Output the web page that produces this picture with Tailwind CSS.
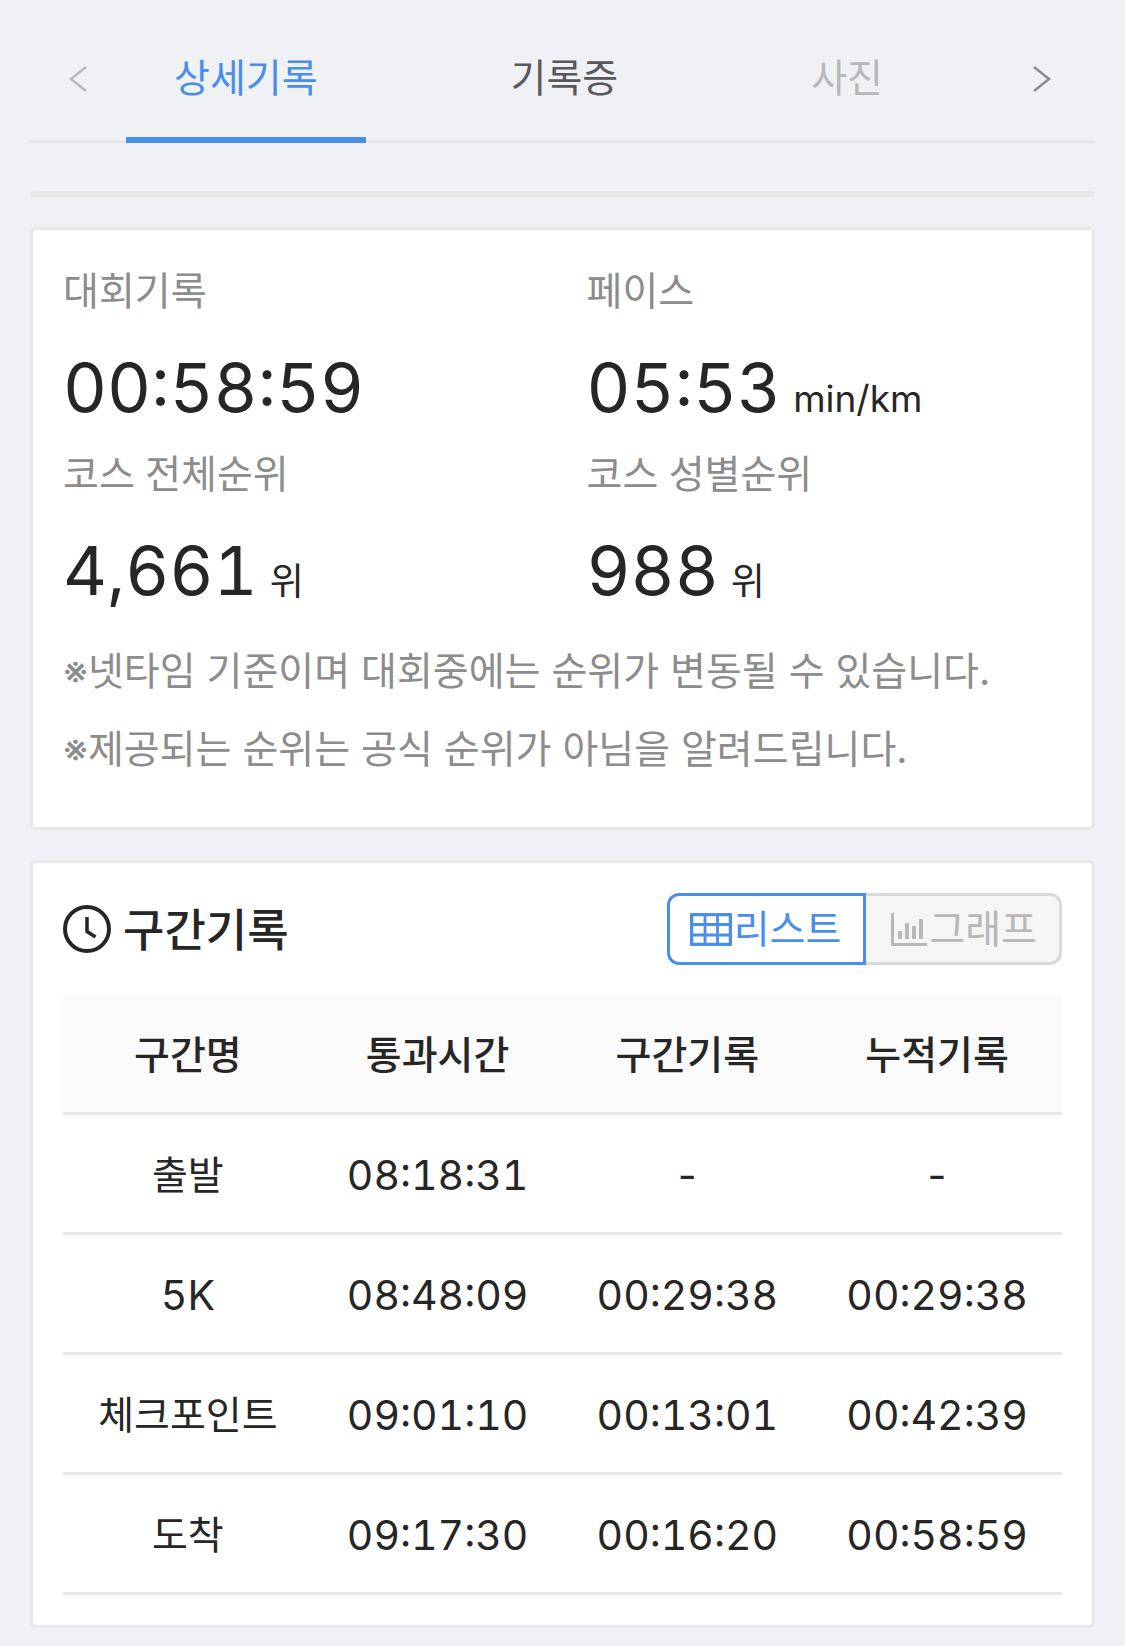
<!DOCTYPE html>
<html lang="ko">
<head>
    <meta charset="UTF-8">
    <meta name="viewport" content="width=device-width, initial-scale=1.0">
    <title>상세기록</title>
    <script src="https://cdn.jsdelivr.net/npm/@tailwindcss/browser@4"></script>
</head>
<body class="bg-[#eff1f5] text-[#262626] font-['Inter','Noto_Sans_CJK_KR',sans-serif] text-[39px] leading-[66px] px-[30px] pb-[18px]">
    <!-- 탭 메뉴 -->
    <nav class="flex h-[143px] border-b-[3px] border-[#e8e8e8]">
        <button type="button" aria-label="이전" class="w-24 shrink-0 flex items-center justify-center pt-[17px] text-[#b8b8b8]">
            <svg class="w-[18px] h-[28px]" viewBox="0 0 18 28" fill="none" stroke="currentColor" stroke-width="2.5"><path d="M17 2 2 14 17 26"/></svg>
        </button>
        <div class="flex flex-1 gap-[97px] whitespace-nowrap">
            <a href="#detail" class="h-[143px] px-12 pt-[45px] text-[#4a8eed] border-b-[6px] border-[#4a8eed]">상세기록</a>
            <a href="#certificate" class="h-[143px] px-12 pt-[45px] text-[#595959]">기록증</a>
            <a href="#photo" class="h-[143px] px-12 pt-[45px] text-[#b8b8b8]">사진</a>
        </div>
        <button type="button" aria-label="다음" class="w-24 shrink-0 flex items-center justify-center pt-[17px] pr-[10px] text-[#8c8c8c]">
            <svg class="w-[18px] h-[28px]" viewBox="0 0 18 28" fill="none" stroke="currentColor" stroke-width="2.5"><path d="M1 2 16 14 1 26"/></svg>
        </button>
    </nav>

    <main>
        <div class="mt-12 h-[6px] rounded-[3px] bg-[#e8e8e8]"></div>

        <!-- 대회기록 요약 -->
        <section class="mt-[30px] bg-white border-[3px] border-[#e8e8e8] rounded-[6px] p-[30px]">
            <dl class="grid grid-cols-2 gap-x-12 tabular-nums">
                <div>
                    <dt class="pb-1 leading-[62px] text-[#8c8c8c]">대회기록</dt>
                    <dd class="mb-3 pt-[18px] h-[105px] text-[68px] leading-[87px]">00:58:59</dd>
                </div>
                <div>
                    <dt class="pb-1 leading-[62px] text-[#8c8c8c]">페이스</dt>
                    <dd class="mb-3 pt-[18px] h-[105px] text-[68px] leading-[87px]">05:53<span class="ml-3 text-[37px]">min/km</span></dd>
                </div>
                <div>
                    <dt class="pb-1 leading-[62px] text-[#8c8c8c]">코스 전체순위</dt>
                    <dd class="mb-3 pt-[18px] h-[105px] text-[68px] leading-[87px]">4,661<span class="ml-3 text-[37px]">위</span></dd>
                </div>
                <div>
                    <dt class="pb-1 leading-[62px] text-[#8c8c8c]">코스 성별순위</dt>
                    <dd class="mb-3 pt-[18px] h-[105px] text-[68px] leading-[87px]">988<span class="ml-3 text-[37px]">위</span></dd>
                </div>
            </dl>
            <div class="mt-3 pb-[3px] text-[#8c8c8c]">
                <p class="mb-3">※넷타임 기준이며 대회중에는 순위가 변동될 수 있습니다.</p>
                <p class="mb-3">※제공되는 순위는 공식 순위가 아님을 알려드립니다.</p>
            </div>
        </section>

        <!-- 구간기록 -->
        <section class="mt-[30px] bg-white border-[3px] border-[#e8e8e8] rounded-[6px] p-[30px]">
            <div class="flex items-center justify-between mb-[30px]">
                <h2 class="flex items-center gap-3 text-[45px] font-medium">
                    <svg class="size-12" viewBox="0 0 48 48" fill="none" stroke="currentColor" stroke-width="4"><circle cx="24" cy="24" r="22"/><path d="M24 12v14.500l8.500 5.500" stroke-width="3.500"/></svg>
                    <span class="pt-1">구간기록</span>
                </h2>
                <div class="flex h-[72px]">
                    <button type="button" class="flex items-center pl-5 pr-[22px] border-[3px] border-[#4a8eed] rounded-l-[12px] bg-white text-[#4a8eed]">
                        <svg class="w-[42px] h-[33px] mr-[2px]" viewBox="0 0 42 33" fill="none" stroke="currentColor"><rect x="1.500" y="1.500" width="39" height="30" rx="1" stroke-width="3.500"/><path d="M0 11.500h42M0 22h42M15 0v33M27.500 0v33" stroke-width="2.800"/></svg>
                        리스트
                    </button>
                    <button type="button" disabled class="flex items-center pl-[25px] pr-[22px] border-[3px] border-l-0 border-[#d9d9d9] rounded-r-[12px] bg-[#f5f5f5] text-[#b8b8b8]">
                        <svg class="w-[36px] h-[33px] mr-[2px]" viewBox="0 0 36 33" fill="currentColor"><path d="M0 0h3v30h33v3H0zM7 18h4v8H7zM14 10h4v16h-4zM21 13h4v13h-4zM28 6h4v20h-4z"/></svg>
                        그래프
                    </button>
                </div>
            </div>

            <table class="w-full table-fixed border-separate border-spacing-0 text-center tabular-nums">
                <thead class="bg-[#fafafa]">
                    <tr class="h-[120px]">
                        <th class="pt-[3px] border-b-[3px] border-[#e8e8e8] font-medium">구간명</th>
                        <th class="pt-[3px] border-b-[3px] border-[#e8e8e8] font-medium">통과시간</th>
                        <th class="pt-[3px] border-b-[3px] border-[#e8e8e8] font-medium">구간기록</th>
                        <th class="pt-[3px] border-b-[3px] border-[#e8e8e8] font-medium">누적기록</th>
                    </tr>
                </thead>
                <tbody class="text-[41px]">
                    <tr class="h-[120px]">
                        <td class="pt-[3px] border-b-[3px] border-[#e8e8e8] text-[39px]">출발</td>
                        <td class="pt-[3px] border-b-[3px] border-[#e8e8e8]">08:18:31</td>
                        <td class="pt-[3px] border-b-[3px] border-[#e8e8e8]">-</td>
                        <td class="pt-[3px] border-b-[3px] border-[#e8e8e8]">-</td>
                    </tr>
                    <tr class="h-[120px]">
                        <td class="pt-[3px] border-b-[3px] border-[#e8e8e8]">5K</td>
                        <td class="pt-[3px] border-b-[3px] border-[#e8e8e8]">08:48:09</td>
                        <td class="pt-[3px] border-b-[3px] border-[#e8e8e8]">00:29:38</td>
                        <td class="pt-[3px] border-b-[3px] border-[#e8e8e8]">00:29:38</td>
                    </tr>
                    <tr class="h-[120px]">
                        <td class="pt-[3px] border-b-[3px] border-[#e8e8e8] text-[39px]">체크포인트</td>
                        <td class="pt-[3px] border-b-[3px] border-[#e8e8e8]">09:01:10</td>
                        <td class="pt-[3px] border-b-[3px] border-[#e8e8e8]">00:13:01</td>
                        <td class="pt-[3px] border-b-[3px] border-[#e8e8e8]">00:42:39</td>
                    </tr>
                    <tr class="h-[120px]">
                        <td class="pt-[3px] border-b-[3px] border-[#e8e8e8] text-[39px]">도착</td>
                        <td class="pt-[3px] border-b-[3px] border-[#e8e8e8]">09:17:30</td>
                        <td class="pt-[3px] border-b-[3px] border-[#e8e8e8]">00:16:20</td>
                        <td class="pt-[3px] border-b-[3px] border-[#e8e8e8]">00:58:59</td>
                    </tr>
                </tbody>
            </table>
        </section>
    </main>
</body>
</html>
